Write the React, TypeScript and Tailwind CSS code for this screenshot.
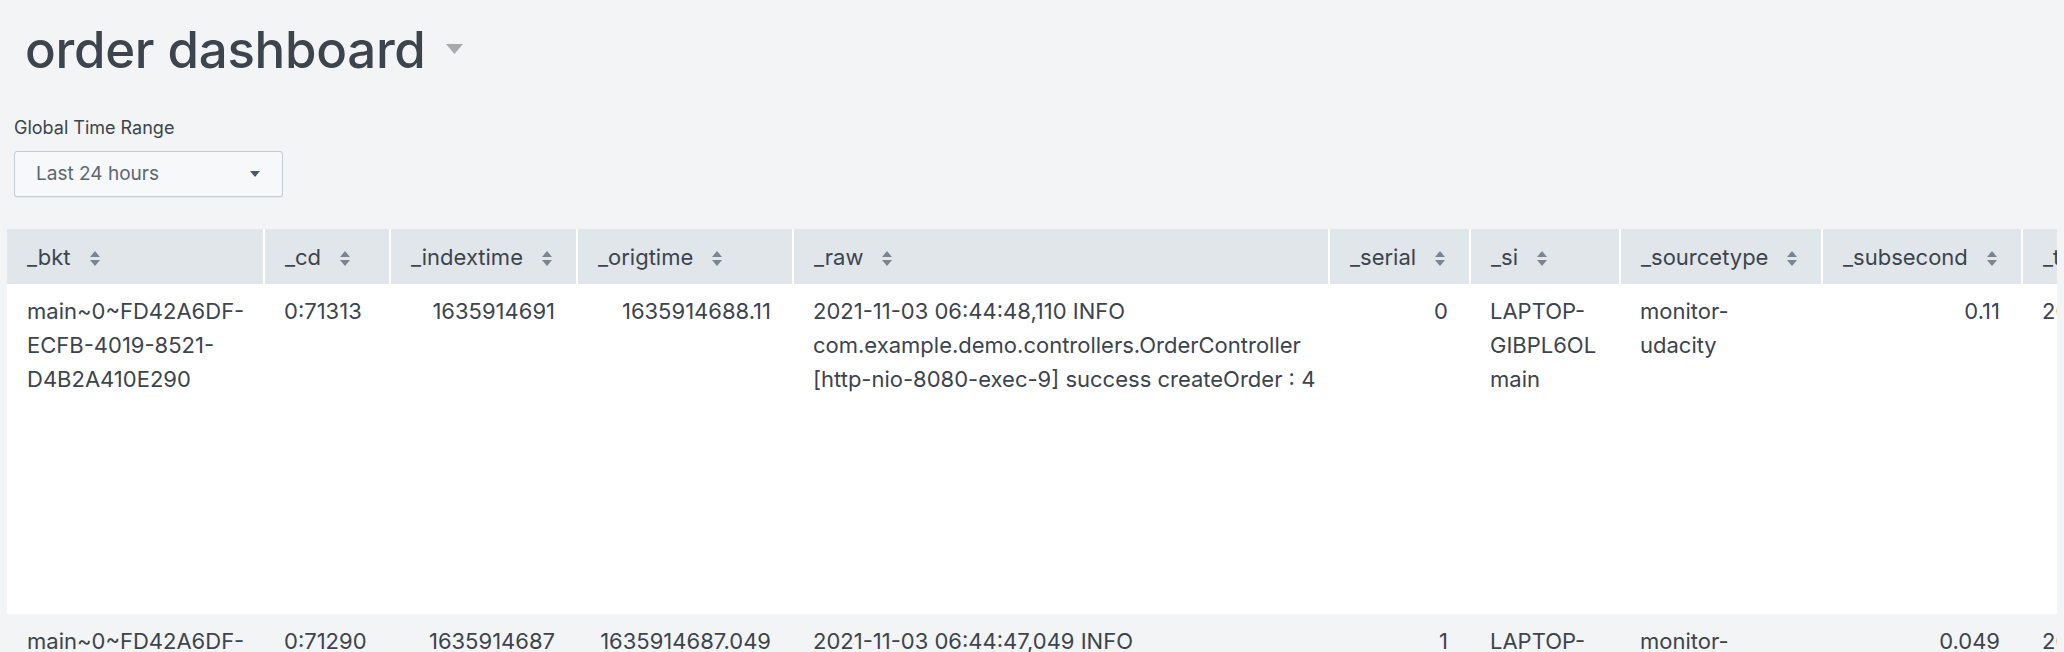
import React from "react";

type Col = { key: string; label: string; width: number; align: "left" | "right" };

const COLS: Col[] = [
    { key: "bkt", label: "_bkt", width: 257, align: "left" },
    { key: "cd", label: "_cd", width: 126, align: "left" },
    { key: "indextime", label: "_indextime", width: 187, align: "right" },
    { key: "origtime", label: "_origtime", width: 216, align: "right" },
    { key: "raw", label: "_raw", width: 536, align: "left" },
    { key: "serial", label: "_serial", width: 141, align: "right" },
    { key: "si", label: "_si", width: 150, align: "left" },
    { key: "sourcetype", label: "_sourcetype", width: 202, align: "left" },
    { key: "subsecond", label: "_subsecond", width: 200, align: "right" },
    { key: "time", label: "_time", width: 300, align: "left" },
];

const ROWS: Record<string, string[]>[] = [
    {
        bkt: ["main~0~FD42A6DF-", "ECFB-4019-8521-", "D4B2A410E290"],
        cd: ["0:71313"],
        indextime: ["1635914691"],
        origtime: ["1635914688.11"],
        raw: ["2021-11-03 06:44:48,110 INFO", "com.example.demo.controllers.OrderController", "[http-nio-8080-exec-9] success createOrder : 4"],
        serial: ["0"],
        si: ["LAPTOP-", "GIBPL6OL", "main"],
        sourcetype: ["monitor-", "udacity"],
        subsecond: ["0.11"],
        time: ["2021-11-03 06:44:48.110 CET"],
    },
    {
        bkt: ["main~0~FD42A6DF-", "ECFB-4019-8521-", "D4B2A410E290"],
        cd: ["0:71290"],
        indextime: ["1635914687"],
        origtime: ["1635914687.049"],
        raw: ["2021-11-03 06:44:47,049 INFO", "com.example.demo.controllers.OrderController", "[http-nio-8080-exec-3] success createOrder : 3"],
        serial: ["1"],
        si: ["LAPTOP-", "GIBPL6OL", "main"],
        sourcetype: ["monitor-", "udacity"],
        subsecond: ["0.049"],
        time: ["2021-11-03 06:44:47.049 CET"],
    },
];

function SortIcon() {
    return (
        <svg width="10" height="15" viewBox="0 0 10 15" className="ml-[19px] inline-block align-[-1px]">
            <path d="M0 6 L5 0 L10 6 Z" fill="#7b8591" />
            <path d="M0 9 L5 15 L10 9 Z" fill="#7b8591" />
        </svg>
    );
}

export default function App() {
    return (
        <main className="min-h-screen w-full bg-[#f2f4f5] text-[#3c444d] font-['Inter',sans-serif] overflow-hidden">
            <div className="flex items-center pl-[25px] pt-[24px]">
                <h1 className="text-[51px] leading-[51px] font-medium tracking-[-0.3px]">order dashboard</h1>
                <svg width="17" height="10" viewBox="0 0 17 10" className="ml-[20px] mt-[-2px]">
                    <path d="M0 0 L17 0 L8.5 10 Z" fill="#a7abaf" />
                </svg>
            </div>

            <div className="pl-[14px] mt-[41px]">
                <div className="text-[18px] leading-[24px]">Global Time Range</div>
                <button
                    type="button"
                    className="mt-[11px] w-[269px] h-[46px] flex items-center justify-between pl-[21px] pr-[22px] bg-[#f7f8fa] border border-[#c3cbd4] rounded-[3px] text-[19px] text-[#5c6773] shadow-[0_1px_0_rgba(0,0,0,0.05)]"
                >
                    <span>Last 24 hours</span>
                    <svg width="10" height="6" viewBox="0 0 10 6">
                        <path d="M0 0 L10 0 L5 6 Z" fill="#4f5964" />
                    </svg>
                </button>
            </div>

            <div className="mx-[7px] mt-[32px] bg-white overflow-hidden">
                <table className="table-fixed border-collapse text-[22px] leading-[34px]" style={{ width: COLS.reduce((s, c) => s + c.width, 0) }}>
                    <colgroup>
                        {COLS.map((c) => (
                            <col key={c.key} style={{ width: c.width }} />
                        ))}
                    </colgroup>
                    <thead>
                        <tr>
                            {COLS.map((c) => (
                                <th
                                    key={c.key}
                                    className="h-[55px] bg-[#e1e6eb] border-r-2 border-white pl-[20px] text-left font-normal whitespace-nowrap"
                                >
                                    {c.label}
                                    <SortIcon />
                                </th>
                            ))}
                        </tr>
                    </thead>
                    <tbody>
                        {ROWS.map((r, i) => (
                            <tr key={i} className={i % 2 === 0 ? "bg-white" : "bg-[#f2f4f5]"}>
                                {COLS.map((c) => (
                                    <td
                                        key={c.key}
                                        className={`${i === 0 ? "h-[330px]" : "h-[200px]"} align-top pt-[10px] pl-[20px] pr-[22px] whitespace-nowrap ${
                                            c.align === "right" ? "text-right" : "text-left"
                                        }`}
                                    >
                                        {r[c.key].map((line, j) => (
                                            <div key={j}>{line}</div>
                                        ))}
                                    </td>
                                ))}
                            </tr>
                        ))}
                    </tbody>
                </table>
            </div>
        </main>
    );
}
